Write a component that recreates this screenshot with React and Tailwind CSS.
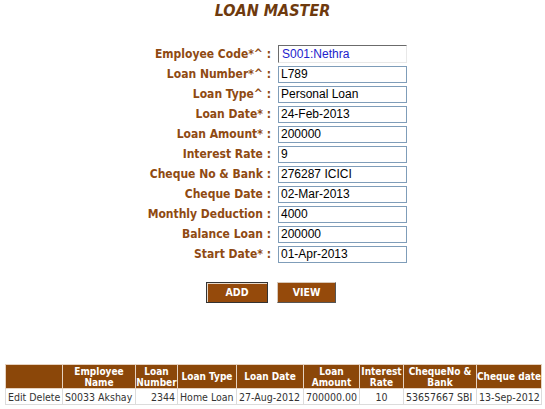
import React from "react";

const fields = [
  ["Employee Code*^ :", "S001:Nethra"],
  ["Loan Number*^ :", "L789"],
  ["Loan Type^ :", "Personal Loan"],
  ["Loan Date* :", "24-Feb-2013"],
  ["Loan Amount* :", "200000"],
  ["Interest Rate :", "9"],
  ["Cheque No & Bank :", "276287 ICICI"],
  ["Cheque Date :", "02-Mar-2013"],
  ["Monthly Deduction :", "4000"],
  ["Balance Loan :", "200000"],
  ["Start Date* :", "01-Apr-2013"],
];

export default function App() {
  return (
    <div className="w-[545px] h-[409px] bg-white relative overflow-hidden">
      <div className="pt-[1px] text-center text-[16px] leading-[20px] font-bold italic text-[#6e3a0e] font-['DejaVu_Sans_Condensed','DejaVu_Sans',sans-serif]">
        LOAN MASTER
      </div>
      <div className="mt-[23px] grid grid-cols-[271px_129px] gap-x-[7px] auto-rows-[20px]">
        {fields.map(([label, value], i) => (
          <React.Fragment key={i}>
            <div className="text-right text-[12px] leading-[20px] font-bold text-[#8f4a12] font-['DejaVu_Sans_Condensed','DejaVu_Sans',sans-serif] whitespace-nowrap">
              {label}
            </div>
            <div className="flex items-center">
              <div
                className={
                  i === 0
                    ? "w-[129px] h-[18px] border border-t-[#6b6b6b] border-l-[#6b6b6b] border-r-[#e8e8e8] border-b-[#e8e8e8] px-[3px] text-[12px] leading-[16px] text-[#2222cc] font-['Liberation_Sans',sans-serif] bg-white"
                    : "w-[129px] h-[17px] border border-[#7f9db9] px-[2px] text-[12px] leading-[15px] text-black font-['Liberation_Sans',sans-serif] bg-white"
                }
              >
                {value}
              </div>
            </div>
          </React.Fragment>
        ))}
      </div>
      <div className="mt-[18px] flex pl-[206px] gap-[9px]">
        <button className="w-[62px] h-[21px] bg-[#954a0b] border border-[#333] shadow-[inset_1px_1px_0_#e8d8c8] text-white text-[10.5px] font-bold font-['DejaVu_Sans_Condensed','DejaVu_Sans',sans-serif]">
          ADD
        </button>
        <button className="w-[59px] h-[21px] bg-[#954a0b] border border-t-[#d8c8b8] border-l-[#d8c8b8] border-r-[#555] border-b-[#555] text-white text-[10.5px] font-bold font-['DejaVu_Sans_Condensed','DejaVu_Sans',sans-serif]">
          VIEW
        </button>
      </div>
      <table className="absolute left-[5px] top-[364px] w-[536px] table-fixed border-collapse font-['DejaVu_Sans_Condensed','DejaVu_Sans',sans-serif]">
        <colgroup>
          <col className="w-[57px]" />
          <col className="w-[73px]" />
          <col className="w-[42px]" />
          <col className="w-[59px]" />
          <col className="w-[67px]" />
          <col className="w-[56px]" />
          <col className="w-[44px]" />
          <col className="w-[73px]" />
          <col className="w-[65px]" />
        </colgroup>
        <thead>
          <tr className="bg-[#8b4709] text-white text-[10px] leading-[11px] font-bold h-[24px]">
            <th className="border border-[#e6d2c0]"></th>
            <th className="border border-[#e6d2c0] px-[1px]">Employee<br />Name</th>
            <th className="border border-[#e6d2c0] px-0">Loan<br />Number</th>
            <th className="border border-[#e6d2c0] px-0">Loan Type</th>
            <th className="border border-[#e6d2c0] px-0">Loan Date</th>
            <th className="border border-[#e6d2c0] px-0">Loan<br />Amount</th>
            <th className="border border-[#e6d2c0] px-0">Interest<br />Rate</th>
            <th className="border border-[#e6d2c0] px-0">ChequeNo &amp;<br />Bank</th>
            <th className="border border-[#e6d2c0] px-0 whitespace-nowrap">Cheque date</th>
          </tr>
        </thead>
        <tbody>
          <tr className="text-[10.5px] leading-[14px] text-[#333] h-[16px] whitespace-nowrap">
            <td className="border border-[#dcdcdc] px-[2px] overflow-hidden">Edit Delete</td>
            <td className="border border-[#dcdcdc] px-[2px] overflow-hidden">S0033 Akshay</td>
            <td className="border border-[#dcdcdc] px-[2px] text-right overflow-hidden">2344</td>
            <td className="border border-[#dcdcdc] px-[2px] overflow-hidden">Home Loan</td>
            <td className="border border-[#dcdcdc] px-[2px] overflow-hidden">27-Aug-2012</td>
            <td className="border border-[#dcdcdc] px-[2px] overflow-hidden">700000.00</td>
            <td className="border border-[#dcdcdc] px-[2px] text-center overflow-hidden">10</td>
            <td className="border border-[#dcdcdc] px-[2px] overflow-hidden">53657667 SBI</td>
            <td className="border border-[#dcdcdc] px-[2px] overflow-hidden">13-Sep-2012</td>
          </tr>
        </tbody>
      </table>
    </div>
  );
}
